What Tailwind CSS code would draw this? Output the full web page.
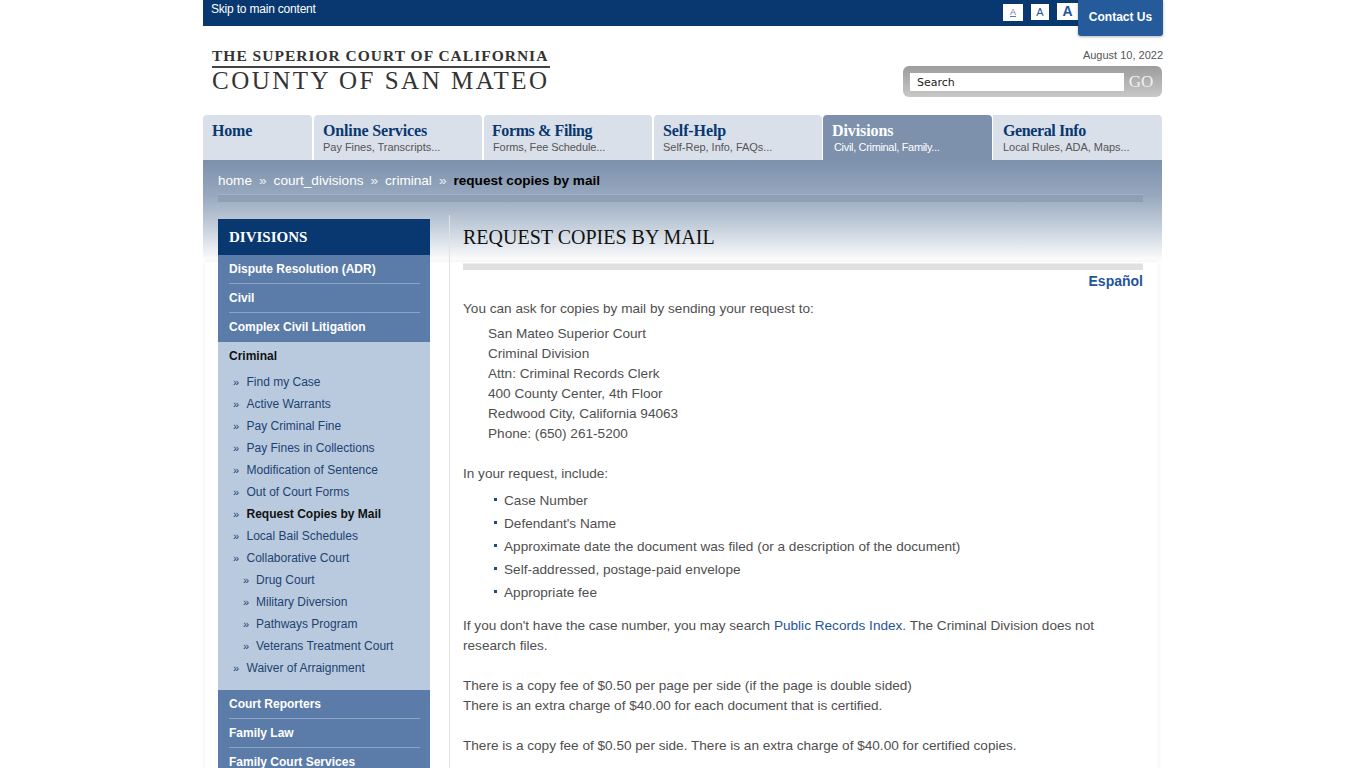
<!DOCTYPE html>
<html lang="en">
<head>
<meta charset="utf-8">
<title>Request Copies by Mail</title>
<script src="https://cdn.jsdelivr.net/npm/@tailwindcss/browser@4"></script>
</head>
<body class="bg-white font-['Liberation_Sans',Arial,sans-serif]">
<div class="h-[768px] overflow-hidden">
<div class="w-[960px] mx-auto">
  <!-- top bar -->
  <div class="h-[26px] bg-[#08386f] flex justify-between pl-2 pr-0">
    <a class="text-white text-[12px] leading-[18px] tracking-[-0.2px]">Skip to main content</a>
    <div class="flex items-start">
      <div class="flex items-start gap-[8px] pt-[3px]">
        <span class="w-[20px] h-[17px] mt-[1px] bg-white text-[#5d7ba6] text-[9px] leading-[17px] text-center underline">A</span>
        <span class="w-[18px] h-[16px] mt-[1px] bg-white text-[#1f5597] text-[11px] leading-[16px] text-center">A</span>
        <span class="w-[21px] h-[17px] bg-white text-[#1f5597] text-[14px] leading-[16px] font-bold text-center">A</span>
      </div>
      <a class="w-[85px] h-[36px] bg-[#255a9b] rounded-b-[3px] text-white text-[12px] font-bold text-center leading-[35px] shadow-[0_1px_3px_rgba(0,0,0,0.3)] relative">Contact Us</a>
    </div>
  </div>
  <!-- header -->
  <div class="h-[89px] flex justify-between">
    <div class="ml-[9px] mt-[21px] w-[338px] font-['Liberation_Serif',serif] text-[#333]">
      <div class="text-[15.5px] leading-[18px] font-bold tracking-[1px] whitespace-nowrap">THE SUPERIOR COURT OF CALIFORNIA</div>
      <div class="h-[2px] bg-[#444] mt-[1px]"></div>
      <div class="text-[25px] leading-[26px] tracking-[2.5px] whitespace-nowrap">COUNTY OF SAN MATEO</div>
    </div>
    <div class="flex flex-col items-end">
      <div class="text-[11px] leading-[13px] text-[#555] mt-[23px]">August 10, 2022</div>
      <div class="mt-[4px] mr-[1px] w-[259px] h-[31px] rounded-[6px] bg-gradient-to-b from-[#9c9c9c] to-[#c8c8c8] flex items-center pl-[7px]">
        <div class="w-[214px] h-[18px] mt-[1px] bg-white font-['DejaVu_Sans',sans-serif] text-[11px] leading-[19px] text-[#222] pl-[7px]">Search</div>
        <div class="w-[34px] text-center font-['Liberation_Serif',serif] text-[17px] text-[#f0f0f0] leading-[19px]">GO</div>
      </div>
    </div>
  </div>
  <!-- nav -->
  <div class="flex h-[45px] w-[959px] text-[#08386f]">
    <div class="w-[109px] mr-[2px] bg-[#dae0ea] rounded-t-[4px] pl-[9px] pt-[7px]"><div class="font-['Liberation_Serif',serif] font-bold text-[16px] leading-[18px] tracking-[-0.2px]">Home</div></div>
    <div class="w-[168px] mr-[2px] bg-[#dae0ea] rounded-t-[4px] pl-[9px] pt-[7px]"><div class="font-['Liberation_Serif',serif] font-bold text-[16px] leading-[18px] tracking-[-0.15px]">Online Services</div><div class="text-[11px] leading-[13px] text-[#555] mt-[1px] tracking-[-0.03px]">Pay Fines, Transcripts...</div></div>
    <div class="w-[168px] mr-[2px] bg-[#dae0ea] rounded-t-[4px] pl-[8px] pt-[7px]"><div class="font-['Liberation_Serif',serif] font-bold text-[16px] leading-[18px] tracking-[-0.4px]">Forms &amp; Filing</div><div class="text-[11px] leading-[13px] text-[#555] mt-[1px] pl-[1px] tracking-[-0.1px]">Forms, Fee Schedule...</div></div>
    <div class="w-[168px] mr-[1px] bg-[#dae0ea] rounded-t-[4px] pl-[9px] pt-[7px]"><div class="font-['Liberation_Serif',serif] font-bold text-[16px] leading-[18px] tracking-[-0.1px]">Self-Help</div><div class="text-[11px] leading-[13px] text-[#555] mt-[1px] tracking-[-0.03px]">Self-Rep, Info, FAQs...</div></div>
    <div class="w-[169px] mr-[1px] bg-[#7d91ad] rounded-t-[4px] pl-[9px] pt-[7px] text-white"><div class="font-['Liberation_Serif',serif] font-bold text-[16px] leading-[18px] tracking-[-0.1px]">Divisions</div><div class="text-[11px] leading-[13px] text-white mt-[1px] pl-[2px] tracking-[-0.33px]">Civil, Criminal, Family...</div></div>
    <div class="w-[169px] bg-[#dae0ea] rounded-tr-[4px] pl-[10px] pt-[7px]"><div class="font-['Liberation_Serif',serif] font-bold text-[16px] leading-[18px] tracking-[-0.4px]">General Info</div><div class="text-[11px] leading-[13px] text-[#555] mt-[1px] tracking-[-0.05px]">Local Rules, ADA, Maps...</div></div>
  </div>
  <!-- body area with gradient -->
  <div class="relative w-[959px] bg-[linear-gradient(to_bottom,#7d91ad_0%,#97a8be_35%,#ccd5e0_70%,#ffffff_100%)] bg-no-repeat bg-[size:100%_102px]">
    <div class="absolute left-[2px] right-[4px] top-[102px] h-[600px] shadow-[0_0_4px_rgba(0,0,0,0.08)]"></div>
    <div class="relative">
      <!-- breadcrumb -->
      <div class="h-[42px] pl-[15px] pt-[12px] text-[13.6px] leading-[17px] text-white whitespace-nowrap flex">
        <span>home</span><span class="mx-[7px] text-[#f0f0f0]">»</span><span>court_divisions</span><span class="mx-[7px] text-[#f0f0f0]">»</span><span>criminal</span><span class="mx-[7px] text-[#f0f0f0]">»</span><span class="text-black font-bold">request copies by mail</span>
      </div>
      <div class="ml-[15px] w-[925px] h-[8px] -mt-[8px] bg-[#8f9fb6] border-t border-[#a2b0c4]"></div>
      <div class="flex pl-[15px] pt-[17px]">
        <!-- sidebar -->
        <div class="w-[212px] shrink-0">
          <div class="h-[36px] bg-[#08386f] pl-[11px] font-['Liberation_Serif',serif] font-bold text-[15px] leading-[36px] text-white">DIVISIONS</div>
          <div class="bg-[#5b7ba8] text-white text-[12px] font-bold px-[11px]">
            <div class="h-[29px] leading-[28px] border-b border-[#8ba3c4] -mr-[1px]">Dispute Resolution (ADR)</div>
            <div class="h-[29px] leading-[28px] border-b border-[#8ba3c4] -mr-[1px]">Civil</div>
            <div class="h-[29px] leading-[28px]">Complex Civil Litigation</div>
          </div>
          <div class="bg-[#b9cade] h-[348px] text-[12px] text-[#1d4272]">
            <div class="h-[29px] pl-[11px] leading-[28px] font-bold text-[#111]">Criminal</div>
            <ul class="pl-[15px]">
              <li class="h-[22px] leading-[22px] flex"><span class="w-[13.5px] text-[11px]">»</span>Find my Case</li>
              <li class="h-[22px] leading-[22px] flex"><span class="w-[13.5px] text-[11px]">»</span>Active Warrants</li>
              <li class="h-[22px] leading-[22px] flex"><span class="w-[13.5px] text-[11px]">»</span>Pay Criminal Fine</li>
              <li class="h-[22px] leading-[22px] flex"><span class="w-[13.5px] text-[11px]">»</span>Pay Fines in Collections</li>
              <li class="h-[22px] leading-[22px] flex"><span class="w-[13.5px] text-[11px]">»</span>Modification of Sentence</li>
              <li class="h-[22px] leading-[22px] flex"><span class="w-[13.5px] text-[11px]">»</span>Out of Court Forms</li>
              <li class="h-[22px] leading-[22px] flex text-[#111] font-bold"><span class="w-[13.5px] text-[11px] font-normal text-[#1d4272]">»</span>Request Copies by Mail</li>
              <li class="h-[22px] leading-[22px] flex"><span class="w-[13.5px] text-[11px]">»</span>Local Bail Schedules</li>
              <li class="h-[22px] leading-[22px] flex"><span class="w-[13.5px] text-[11px]">»</span>Collaborative Court</li>
              <li class="h-[22px] leading-[22px] flex pl-[10px]"><span class="w-[13px] text-[11px]">»</span>Drug Court</li>
              <li class="h-[22px] leading-[22px] flex pl-[10px]"><span class="w-[13px] text-[11px]">»</span>Military Diversion</li>
              <li class="h-[22px] leading-[22px] flex pl-[10px]"><span class="w-[13px] text-[11px]">»</span>Pathways Program</li>
              <li class="h-[22px] leading-[22px] flex pl-[10px]"><span class="w-[13px] text-[11px]">»</span>Veterans Treatment Court</li>
              <li class="h-[22px] leading-[22px] flex"><span class="w-[13.5px] text-[11px]">»</span>Waiver of Arraignment</li>
            </ul>
          </div>
          <div class="bg-[#5b7ba8] text-white text-[12px] font-bold px-[11px]">
            <div class="h-[29px] leading-[28px] border-b border-[#8ba3c4] -mr-[1px]">Court Reporters</div>
            <div class="h-[29px] leading-[28px] border-b border-[#8ba3c4] -mr-[1px]">Family Law</div>
            <div class="h-[29px] leading-[28px]">Family Court Services</div>
          </div>
        </div>
        <!-- main -->
        <div class="ml-[19px] -mt-[4px] border-l border-[#e2e2e2] pl-[13px] w-[694px] text-[13.6px] leading-[20px] text-[#4f4f4f]">
          <h1 class="font-['Liberation_Serif',serif] text-[20px] leading-[24px] text-[#111] mt-[10px]">REQUEST COPIES BY MAIL</h1>
          <div class="h-[7px] bg-[#e0e0e0] mt-[14px] border-t border-[#efefef]"></div>
          <div class="text-right font-bold text-[14px] text-[#1f5597] mt-[1px]">Español</div>
          <p class="mt-[8px]">You can ask for copies by mail by sending your request to:</p>
          <div class="ml-[25px] mt-[5px]">San Mateo Superior Court<br>Criminal Division<br>Attn: Criminal Records Clerk<br>400 County Center, 4th Floor<br>Redwood City, California 94063<br>Phone: (650) 261-5200</div>
          <p class="mt-[20px]">In your request, include:</p>
          <ul class="ml-[41px] mt-[5px]">
            <li class="h-[23px] leading-[23px] relative"><span class="absolute -left-[10px] top-[9px] w-[3px] h-[3px] bg-[#1f4a85]"></span>Case Number</li>
            <li class="h-[23px] leading-[23px] relative"><span class="absolute -left-[10px] top-[9px] w-[3px] h-[3px] bg-[#1f4a85]"></span>Defendant's Name</li>
            <li class="h-[23px] leading-[23px] relative"><span class="absolute -left-[10px] top-[9px] w-[3px] h-[3px] bg-[#1f4a85]"></span>Approximate date the document was filed (or a description of the document)</li>
            <li class="h-[23px] leading-[23px] relative"><span class="absolute -left-[10px] top-[9px] w-[3px] h-[3px] bg-[#1f4a85]"></span>Self-addressed, postage-paid envelope</li>
            <li class="h-[23px] leading-[23px] relative"><span class="absolute -left-[10px] top-[9px] w-[3px] h-[3px] bg-[#1f4a85]"></span>Appropriate fee</li>
          </ul>
          <p class="mt-[12px] w-[680px]">If you don't have the case number, you may search <a class="text-[#1f5597]">Public Records Index</a>. The Criminal Division does not research files.</p>
          <p class="mt-[20px]">There is a copy fee of $0.50 per page per side (if the page is double sided)<br>There is an extra charge of $40.00 for each document that is certified.</p>
          <p class="mt-[20px]">There is a copy fee of $0.50 per side. There is an extra charge of $40.00 for certified copies.</p>
        </div>
      </div>
    </div>
  </div>
</div>
</div>
</body>
</html>
